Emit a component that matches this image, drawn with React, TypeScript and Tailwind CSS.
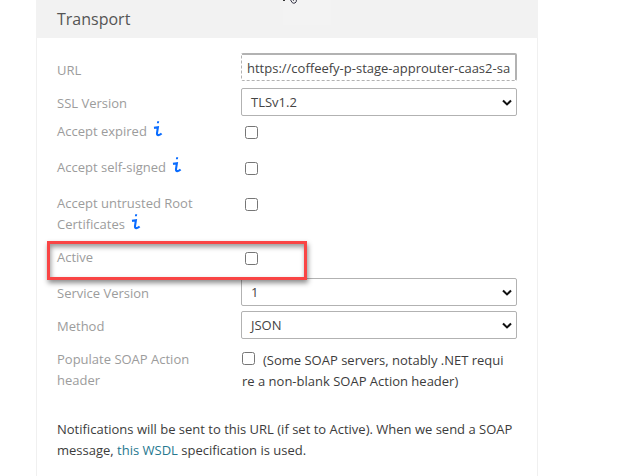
import type { ReactNode } from "react";

function InfoIcon({ className }: { className: string }) {
  return (
    <svg className={`h-[16px] w-[10px] shrink-0 ${className}`} viewBox="0 0 10 16" fill="none">
      <path d="M4.2 0.3h2l-.4 1.9H3.9z" fill="#0a6cff" />
      <path
        d="M1 6.9L4.9 6.2L4 12.2Q3.8 14.2 5.3 14.1Q7 14 8.6 12.5"
        stroke="#0a6cff"
        strokeWidth="2.1"
      />
    </svg>
  );
}

function CheckBox({ className = "" }: { className?: string }) {
  return (
    <input
      type="checkbox"
      className={`block h-[13px] w-[13px] shrink-0 appearance-none rounded-[2.5px] border border-[#767676] bg-white ${className}`}
    />
  );
}

function SelectBox({ value }: { value: string }) {
  return (
    <div className="mt-[2px] flex h-[28px] w-[276px] items-center justify-between rounded-[2px] border border-[#b2b2b2] bg-white pr-[4px] pl-[9px] text-[#444]">
      <span>{value}</span>
      <svg className="mt-px h-[8px] w-[10px]" viewBox="0 0 10 8" fill="none">
        <path d="M1 1.6L5 5.4L9 1.6" stroke="#111" strokeWidth="2.1" />
      </svg>
    </div>
  );
}

function Row({ height, label, children }: { height: string; label: ReactNode; children: ReactNode }) {
  return (
    <div className={`relative flex ${height}`}>
      <div className="w-[184px] shrink-0 pt-[7px] whitespace-nowrap text-[#9c9c9c]">{label}</div>
      <div>{children}</div>
    </div>
  );
}

export default function App() {
  return (
    <div className="h-[476px] w-[642px] overflow-hidden bg-white pl-[36px] font-['Open_Sans',sans-serif] text-[13px] leading-[21px]">
      <section className="h-full w-[502px] border-x border-[#f0f0f0]">
        <header className="relative -mx-px flex h-[38px] items-center bg-[#f2f2f2] pl-[21px] text-[16px] text-[#555]">
          Transport
          <div className="absolute top-0 left-[247px] h-[25px] w-[48px] bg-[#f3f3f3]">
            <svg className="h-[4px] w-[15px]" viewBox="0 0 15 4" fill="none">
              <path d="M0 0.4h2" stroke="#222" />
              <path d="M7.6 0L9.2 2.6Q10 3.6 12 3Q13.6 2.2 13.4 0M9.8 0L10.8 0.6" stroke="#333344" />
            </svg>
          </div>
        </header>
        <div className="pt-[15px] pl-[20px]">
          <Row height="h-[33px]" label="URL">
            <div className="flex h-[28px] w-[276px] items-center overflow-hidden rounded-[2px] border border-t-2 border-r-2 border-dashed border-[#b2b2b2] pt-[2px] pl-[5px] whitespace-nowrap text-[#444] [border-top-style:solid] [border-right-style:solid]">
              https://coffeefy-p-stage-approuter-caas2-sa
            </div>
          </Row>
          <Row height="h-[28px]" label="SSL Version">
            <SelectBox value="TLSv1.2" />
          </Row>
          <Row height="h-[36px]" label={<span className="flex">Accept expired<InfoIcon className="ml-[6px]" /></span>}>
            <CheckBox className="mt-[12px] ml-[4px]" />
          </Row>
          <Row height="h-[36px]" label={<span className="flex">Accept self-signed<InfoIcon className="ml-[6px]" /></span>}>
            <CheckBox className="mt-[12px] ml-[4px]" />
          </Row>
          <Row
            height="h-[54px]"
            label={
              <>
                Accept untrusted Root
                <span className="flex">Certificates<InfoIcon className="ml-[6px]" /></span>
              </>
            }
          >
            <CheckBox className="mt-[12px] ml-[4px]" />
          </Row>
          <Row height="h-[36px]" label="Active">
            <CheckBox className="mt-[12px] ml-[4px]" />
            <div className="absolute top-px left-[-10px] z-10 h-[39px] w-[260px] border-3 border-[#f94545] shadow-[1px_3px_5px_rgba(0,0,0,0.45),inset_1px_3px_5px_rgba(0,0,0,0.4)]" />
          </Row>
          <Row height="h-[33px]" label="Service Version">
            <SelectBox value="1" />
          </Row>
          <Row height="h-[33px]" label="Method">
            <SelectBox value="JSON" />
          </Row>
          <Row height="h-[70px]" label={<>Populate SOAP Action<br />header</>}>
            <div className="pt-[8px] pl-px whitespace-nowrap text-[#3c3c3c]">
              <div className="flex">
                <CheckBox className="mt-[2px] mr-[8px]" />
                (Some SOAP servers, notably .NET requi
              </div>
              <div>re a non-blank SOAP Action header)</div>
            </div>
          </Row>
          <p className="pt-[7px] whitespace-nowrap text-[#3c3c3c]">
            Notifications will be sent to this URL (if set to Active). When we send a SOAP
            <br />
            message, <a className="text-[#26788f]">this WSDL</a> specification is used.
          </p>
        </div>
      </section>
    </div>
  );
}
